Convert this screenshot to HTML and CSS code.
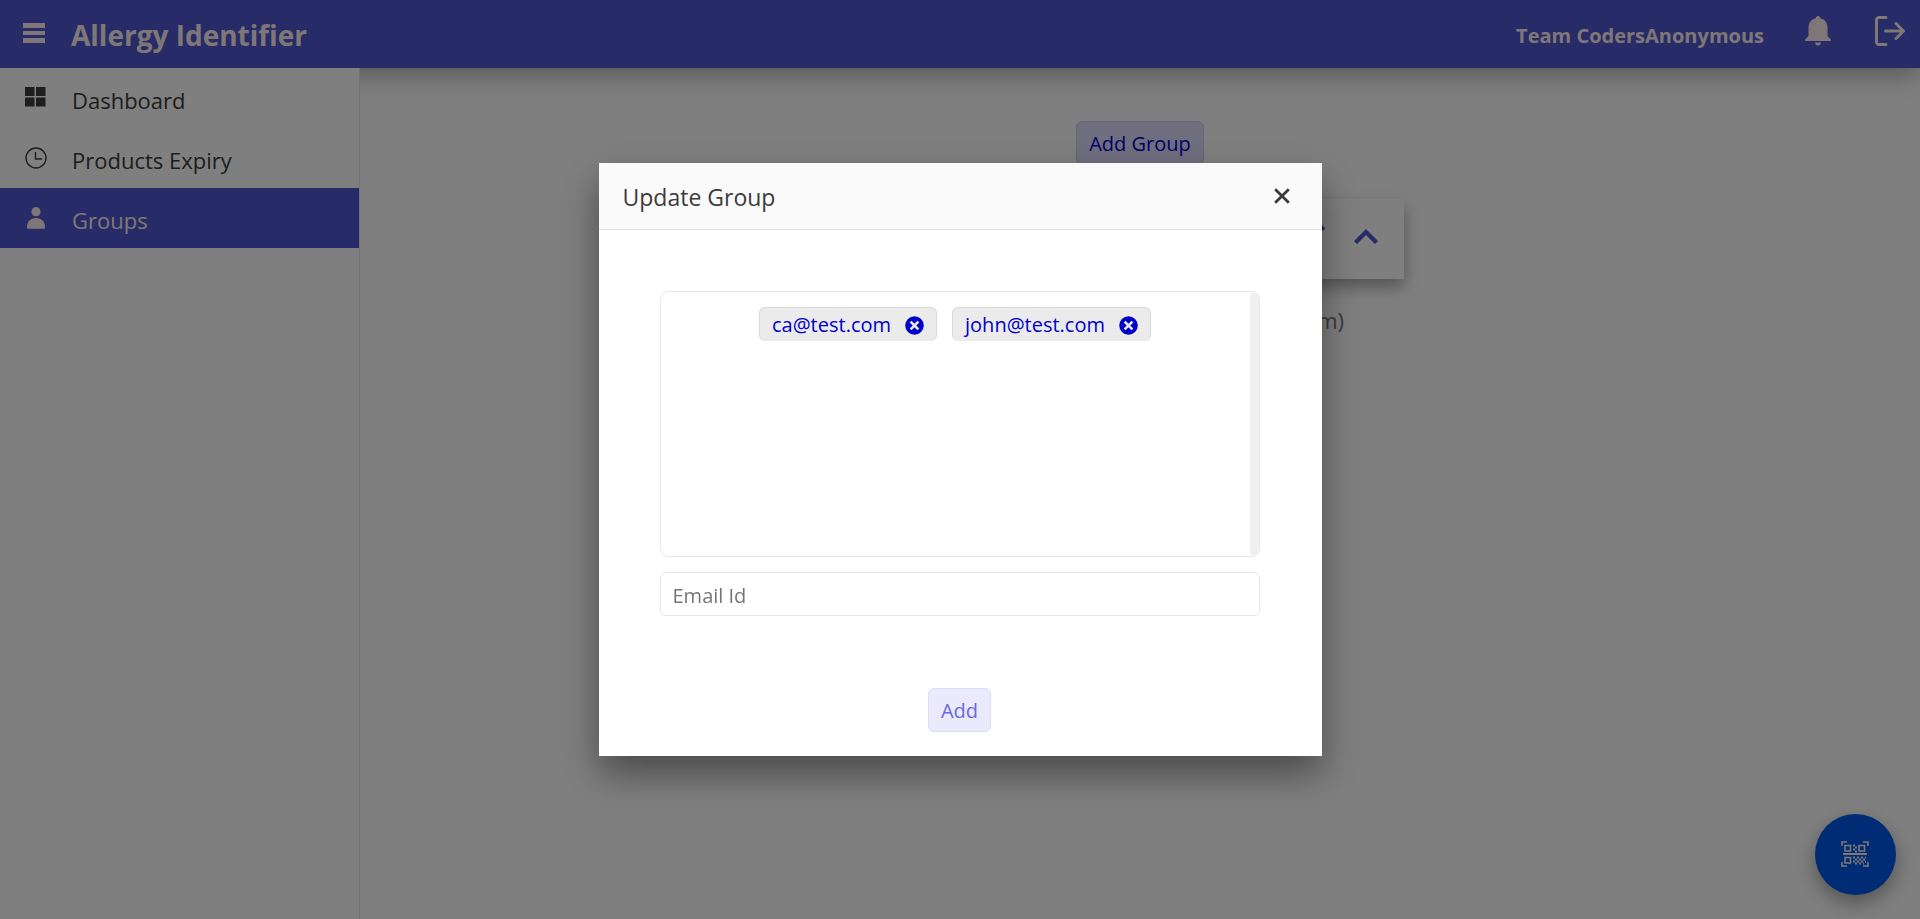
FILE: index.html
```html
<!DOCTYPE html>
<html lang="en">
<head>
<meta charset="utf-8">
<meta name="viewport" content="width=device-width, initial-scale=1">
<title>Allergy Identifier</title>
<link rel="stylesheet" href="styles.css">
</head>
<body>
<div class="app">
  <header class="topbar">
    <button class="icon-button menu" type="button" aria-label="Menu">
      <svg width="22" height="20" viewBox="0 0 22 20" fill="currentColor"><path d="M0 0h22v5H0zM0 8h22v4H0zM0 15h22v5H0z"/></svg>
    </button>
    <h1 class="brand">Allergy Identifier</h1>
    <span class="team">Team CodersAnonymous</span>
    <button class="icon-button bell" type="button" aria-label="Notifications">
      <svg width="26" height="30" viewBox="0 0 26 30" fill="currentColor"><path d="M13 0c1.400 0 2.200 1 2.200 2.200 4.600 1 7.300 4.500 7.300 9.300V20l3.300 3.600V25H.2v-1.400L3.500 20v-8.500c0-4.800 2.700-8.300 7.300-9.300C10.800 1 11.600 0 13 0zM10 26.600h6c-.2 1.800-1.400 3-3 3s-2.800-1.200-3-3z"/></svg>
    </button>
    <button class="icon-button" type="button" aria-label="Log out">
      <svg width="30" height="30" viewBox="0 0 30 30" fill="none" stroke="currentColor" stroke-width="3" stroke-linecap="round" stroke-linejoin="round"><path d="M11 1.500H4A2.500 2.500 0 0 0 1.500 4v22A2.500 2.500 0 0 0 4 28.500h7M10.500 15h18M21 7.500l7.500 7.500-7.500 7.500"/></svg>
    </button>
  </header>
  <div class="workspace">
    <nav class="sidebar">
      <a class="nav-item" href="#dashboard">
        <svg width="22" height="22" viewBox="0 0 22 22" fill="currentColor"><path d="M0 0h9.500v9H0zM11 0h9.500v9H11zM0 10.500h9.500v9H0zM11 10.500h9.500v9H11z"/></svg>
        <span>Dashboard</span>
      </a>
      <a class="nav-item" href="#expiry">
        <svg width="22" height="22" viewBox="0 0 22 22" fill="none" stroke="currentColor" stroke-width="1.400"><circle cx="11" cy="11" r="10"/><path d="M10.500 5v7h6.500"/></svg>
        <span>Products Expiry</span>
      </a>
      <a class="nav-item active" href="#groups">
        <svg width="22" height="22" viewBox="0 0 22 22" fill="currentColor"><circle cx="11" cy="4.700" r="4.600"/><path d="M2 20.500C2 14.500 5.500 11 11 11s9 3.500 9 9.500c0 .8-.6 1.300-1.300 1.300H3.300C2.600 21.800 2 21.300 2 20.500z"/></svg>
        <span>Groups</span>
      </a>
    </nav>
    <main class="content">
      <button class="button" type="button">Add Group</button>
      <section class="group">
        <div class="group-head">
          <button class="icon-button" type="button" aria-label="Edit group">
            <svg width="24" height="24" viewBox="0 0 24 24" fill="currentColor"><path d="M1 18L15.500 3.500l5 5L6 23H1zM17 2l1.500-1.500c.6-.6 1.400-.6 2 0l3 3c.6.6.6 1.400 0 2L22 7z"/></svg>
          </button>
          <button class="icon-button" type="button" aria-label="Collapse group">
            <svg width="24" height="16" viewBox="0 0 24 16" fill="none" stroke="currentColor" stroke-width="4.400"><path d="M1.500 14.500L12 4l10.500 10.500"/></svg>
          </button>
        </div>
        <p class="member">(john@test.com)</p>
      </section>
    </main>
  </div>
  <button class="fab" type="button" aria-label="Scan code">
    <svg width="28" height="26" viewBox="0 0 28 26" fill="none" stroke="currentColor" stroke-width="1.600"><path d="M1 5V1h5M22 1h5v4M1 21v4h5M22 25h5v-4M4 4.500h5.500V10H4zM18 4.500h5.500V10H18zM4 16.500h5.500V22H4z"/><path d="M2 13h24" stroke-width="2"/><path d="M13 3.500v2M15 5.500v2M13 7.500v2M15 9.500v2" stroke-width="2"/><path d="M12 16.500h13M12 20.500h13" stroke-width="2" stroke-dasharray="2 2"/><path d="M14 18.500h11M14 22.500h9" stroke-width="2" stroke-dasharray="2 2"/></svg>
  </button>
</div>

<div class="overlay">
  <div class="modal" role="dialog" aria-modal="true" aria-labelledby="modal-title">
    <div class="modal-head">
      <h2 class="modal-title" id="modal-title">Update Group</h2>
      <button class="icon-button" type="button" aria-label="Close">
        <svg width="16" height="16" viewBox="0 0 16 16" fill="none" stroke="currentColor" stroke-width="2.800"><path d="M1.200 1.200l13.600 13.600M14.800 1.200L1.200 14.800"/></svg>
      </button>
    </div>
    <form class="modal-body">
      <div class="chip-box">
        <div class="chips">
          <span class="chip">ca@test.com
            <button class="icon-button" type="button" aria-label="Remove ca@test.com">
              <svg width="19" height="19" viewBox="0 0 19 19"><circle cx="9.500" cy="9.500" r="9.300" fill="currentColor"/><path d="M5.600 5.600l7.800 7.800M13.400 5.600l-7.800 7.800" stroke="#ebebeb" stroke-width="2.600"/></svg>
            </button>
          </span>
          <span class="chip">john@test.com
            <button class="icon-button" type="button" aria-label="Remove john@test.com">
              <svg width="19" height="19" viewBox="0 0 19 19"><circle cx="9.500" cy="9.500" r="9.300" fill="currentColor"/><path d="M5.600 5.600l7.800 7.800M13.400 5.600l-7.800 7.800" stroke="#ebebeb" stroke-width="2.600"/></svg>
            </button>
          </span>
        </div>
        <div class="scroll-track"></div>
      </div>
      <input class="email" type="email" placeholder="Email Id" aria-label="Email Id">
      <button class="button add" type="button" disabled>Add</button>
    </form>
  </div>
</div>
</body>
</html>
```
FILE: styles.css
```css
* {
  box-sizing: border-box;
}

body {
  margin: 0;
  color: #3c3c3c;
  background: #fff;
  font: 20px/28px "Open Sans", "Noto Sans", sans-serif;
}

svg {
  display: block;
  flex: none;
}

button,
input {
  font: inherit;
}

.app {
  display: flex;
  flex-direction: column;
  min-height: 100vh;
}

.icon-button {
  padding: 0;
  border: 0;
  color: inherit;
  background: none;
}

.topbar {
  display: flex;
  align-items: center;
  height: 68px;
  padding: 0 15px 6px 23px;
  color: #ffefef;
  background: #4e56d0;
  box-shadow: 0 8px 24px rgba(0, 0, 0, 0.3);
}

.menu {
  margin-top: 4px;
}

.brand {
  margin: 8px auto 0 26px;
  font-size: 28px;
  line-height: 36px;
}

.team {
  margin-top: 9px;
  font-weight: 700;
}

.bell {
  margin: 0 44px 0 41px;
}

.workspace {
  display: flex;
  flex: 1;
}

.sidebar {
  position: relative;
  flex: none;
  width: 360px;
  border-right: 1px solid #e6e6e6;
  background: #fff;
}

.nav-item {
  display: flex;
  gap: 25px;
  height: 60px;
  padding: 19px 25px;
  color: #3c3c3c;
  font-size: 22px;
  line-height: 26px;
  text-decoration: none;
}

.active {
  color: #ffefef;
  background: #4e56d0;
}

.content {
  display: flex;
  flex: 1;
  flex-direction: column;
  align-items: center;
  gap: 34px;
  padding-top: 53px;
}

.button {
  height: 44px;
  padding: 2px 12px 0;
  border: 1px solid #cfcbe8;
  border-radius: 6px;
  color: #0000cd;
  background: #dfdcfc;
}

.group {
  width: 528px;
}

.group-head {
  display: flex;
  align-items: center;
  justify-content: flex-end;
  gap: 29px;
  height: 80px;
  padding: 0 26px 6px;
  color: #4e56d0;
  box-shadow: 0 8px 16px rgba(0, 0, 0, 0.35);
}

.member {
  margin: 27px 60px;
  color: #777;
  font-size: 22px;
  text-align: right;
}

.fab {
  position: fixed;
  right: 24px;
  bottom: 24px;
  display: grid;
  place-items: center;
  width: 81px;
  height: 81px;
  padding: 0 1px 2px 0;
  border: 0;
  border-radius: 50%;
  color: #ffefef;
  background: #0059ea;
  box-shadow: 0 8px 20px rgba(0, 0, 0, 0.35);
}

.overlay {
  position: fixed;
  inset: 0;
  display: grid;
  place-items: center;
  background: rgba(0, 0, 0, 0.5);
}

.modal {
  width: 723px;
  max-width: 100%;
  background: #fff;
  box-shadow: 0 18px 36px rgba(0, 0, 0, 0.42);
}

.modal-head {
  display: flex;
  align-items: center;
  justify-content: space-between;
  height: 67px;
  padding: 0 32px 0 24px;
  border-bottom: 1px solid #e1e1e1;
  background: #fafafa;
}

.modal-title {
  margin: 2px 0 0;
  font-size: 23px;
  font-weight: 400;
}

.modal-body {
  display: flex;
  flex-direction: column;
  align-items: center;
  padding: 61px 62px 24px 61px;
}

.chip-box {
  display: flex;
  width: 100%;
  height: 266px;
  border: 1px solid #e6e6e6;
  border-radius: 9px;
}

.chips {
  display: flex;
  flex: 1;
  align-items: flex-start;
  justify-content: center;
  gap: 15px;
  padding-top: 15px;
}

.chip {
  display: flex;
  align-items: center;
  gap: 14px;
  height: 34px;
  padding: 1px 12px 0;
  border: 1px solid #d9d9d9;
  border-bottom: 0;
  border-radius: 6px;
  color: #0000cd;
  background: #ebebeb;
}

.scroll-track {
  width: 9px;
  border-radius: 6px;
  background: #f0f0f0;
}

.email {
  width: 100%;
  height: 44px;
  margin: 15px 0 72px;
  padding: 2px 12px 0;
  border: 1px solid #e6e6e6;
  border-radius: 6px;
  background: #fff;
}

.email::placeholder {
  color: #757575;
}

.add {
  border-color: #dfdcf4;
  color: #6a6ae0;
  background: #ebe9fc;
}
```
